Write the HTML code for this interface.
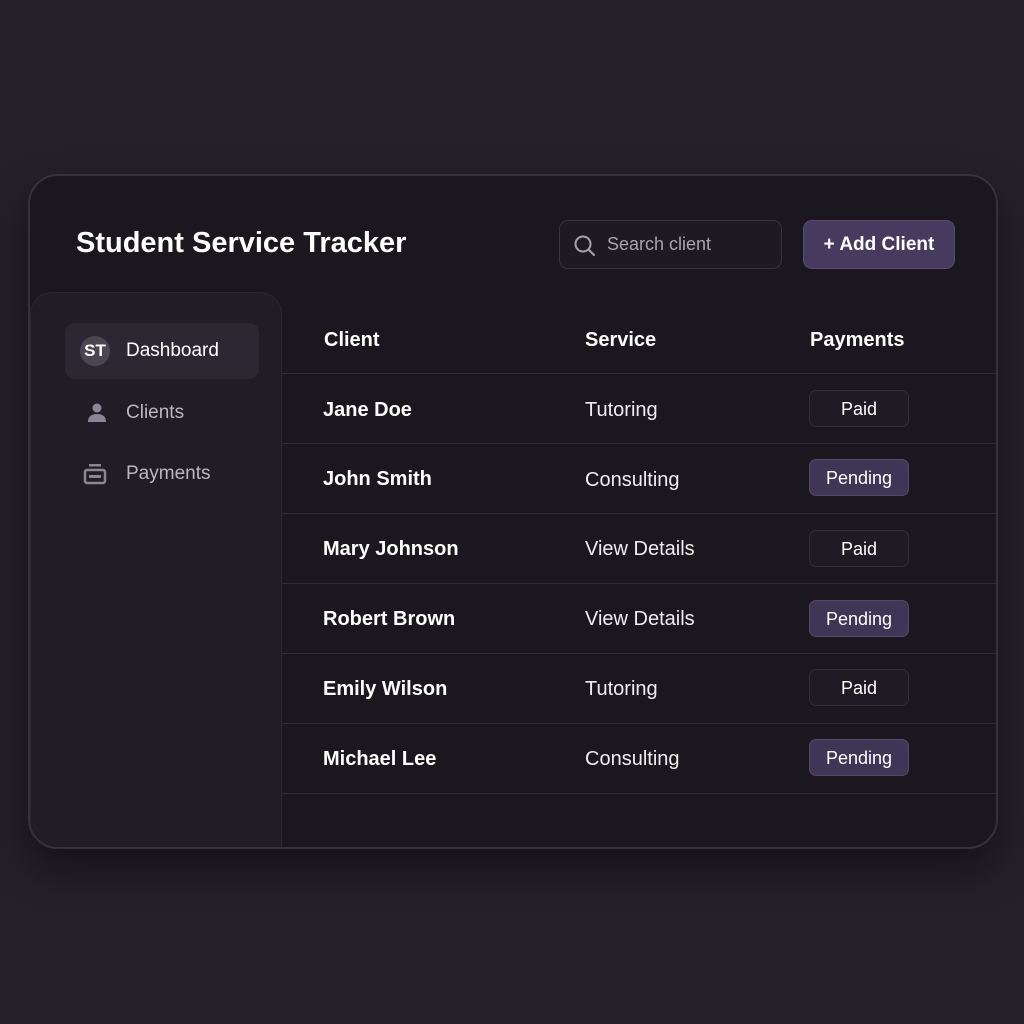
<!DOCTYPE html>
<html><head><style>
*{margin:0;padding:0;box-sizing:border-box}
body{width:1024px;height:1024px;background:#252029;font-family:"Liberation Sans",sans-serif;position:relative;overflow:hidden}
.card{position:absolute;left:28px;top:174px;width:970px;height:675px;background:#1b171e;border:2px solid #37313d;border-radius:30px;box-shadow:0 20px 40px rgba(0,0,0,.45);overflow:hidden}
.title{position:absolute;left:46px;top:51px;color:#fff;font-size:29px;font-weight:bold;letter-spacing:0}
.search{position:absolute;left:529px;top:44px;width:223px;height:49px;border:1px solid #38313f;border-radius:9px;background:#1e1a22;color:#a9a3b0;font-size:18px;padding:13px 0 0 47px}
.add{position:absolute;left:773px;top:44px;width:152px;height:49px;border-radius:9px;background:#463b5e;border:1px solid #574b70;color:#fff;font-size:19px;font-weight:bold;text-align:center;line-height:47px}
.side{position:absolute;left:0;top:116px;width:252px;height:570px;background:#211c25;border:1px solid #2b2630;border-radius:22px 22px 0 0}
.nav{position:absolute;left:96px;font-size:19px;color:#bcb6c2}
.act{position:absolute;left:34px;top:30px;width:194px;height:56px;background:#2d2733;border-radius:10px}
.av{position:absolute;left:50px;top:160px;width:30px;height:30px;border-radius:50%;background:#4b4452;color:#fff;font-weight:bold;font-size:17px;text-align:center;line-height:30px}
.hd{position:absolute;top:153px;color:#fff;font-size:20px;font-weight:bold}
.line{position:absolute;left:252px;width:716px;height:1px;background:#2f2a34}
.name{position:absolute;left:293px;color:#fff;font-size:20px;font-weight:bold}
.svc{position:absolute;left:555px;color:#eee;font-size:20px}
.badge{position:absolute;left:779px;width:100px;height:37px;border-radius:7px;text-align:center;line-height:36px;color:#fff;font-size:18px}
.paid{background:#1f1a23;border:1px solid #332d38}
.pend{background:#3f3554;border:1px solid #54486a}
</style></head><body>
<div class="card">
<div class="title">Student Service Tracker</div>
<div class="search"><svg style="position:absolute;left:14px;top:14px" width="22" height="22" viewBox="0 0 22 22"><circle cx="9" cy="9" r="7.5" fill="none" stroke="#a9a3b0" stroke-width="2"/><path d="M14.5 14.5 20 20" stroke="#a9a3b0" stroke-width="2" stroke-linecap="round"/></svg>Search client</div>
<div class="add">+ Add Client</div>
<div class="side">
<div class="act"></div>
</div>
<div class="av">ST</div>
<div class="nav" style="top:164px;color:#fff">Dashboard</div>
<svg style="position:absolute;left:56px;top:226px" width="22" height="22" viewBox="0 0 22 22"><circle cx="11" cy="6" r="4.5" fill="#8c8593"/><path d="M2 20c0-6 4-8 9-8s9 2 9 8z" fill="#8c8593"/></svg>
<div class="nav" style="top:226px">Clients</div>
<svg style="position:absolute;left:53px;top:287px" width="24" height="22" viewBox="0 0 24 22"><rect x="6" y="1" width="12" height="2.5" fill="#8c8593"/><rect x="2" y="7" width="20" height="13" rx="2" fill="none" stroke="#8c8593" stroke-width="2.5"/><rect x="6" y="12" width="12" height="3" fill="#8c8593"/></svg>
<div class="nav" style="top:287px">Payments</div>
<div class="hd" style="left:294px">Client</div>
<div class="hd" style="left:555px">Service</div>
<div class="hd" style="left:780px">Payments</div>
<div class="line" style="top:197px"></div>
<div class="line" style="top:267px"></div>
<div class="line" style="top:337px"></div>
<div class="line" style="top:407px"></div>
<div class="line" style="top:477px"></div>
<div class="line" style="top:547px"></div>
<div class="line" style="top:617px"></div>
<div class="name" style="top:223px">Jane Doe</div><div class="svc" style="top:223px">Tutoring</div><div class="badge paid" style="top:214px">Paid</div>
<div class="name" style="top:292px">John Smith</div><div class="svc" style="top:293px">Consulting</div><div class="badge pend" style="top:283px">Pending</div>
<div class="name" style="top:362px">Mary Johnson</div><div class="svc" style="top:362px">View Details</div><div class="badge paid" style="top:354px">Paid</div>
<div class="name" style="top:432px">Robert Brown</div><div class="svc" style="top:432px">View Details</div><div class="badge pend" style="top:424px">Pending</div>
<div class="name" style="top:502px">Emily Wilson</div><div class="svc" style="top:502px">Tutoring</div><div class="badge paid" style="top:493px">Paid</div>
<div class="name" style="top:572px">Michael Lee</div><div class="svc" style="top:572px">Consulting</div><div class="badge pend" style="top:563px">Pending</div>
</div>
</body></html>
